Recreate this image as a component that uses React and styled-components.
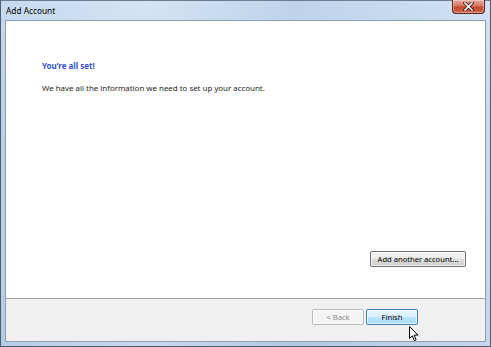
import React from 'react'
import styled, { createGlobalStyle } from 'styled-components'

const Global = createGlobalStyle`
  html, body { margin: 0; padding: 0; background: #ffffff; }
  body { font-family: "Noto Sans", "Open Sans", Arial, sans-serif; }
`

const Window = styled.div`
  position: relative;
  box-sizing: border-box;
  width: 491px;
  height: 347px;
  display: flex;
  flex-direction: column;
  border: 1px solid #4f5c6b;
  border-top-color: #6c7d90;
  padding: 0 4px 4px 4px;
  background:
    linear-gradient(90deg, rgba(255,255,255,0) 0%, rgba(255,255,255,0.25) 30%, rgba(160,185,215,0.2) 60%, rgba(255,255,255,0.2) 100%),
    linear-gradient(180deg, #c6daf0 0%, #bad1ea 40%, #b6cde8 100%);
`

const TitleBar = styled.div`
  height: 19px;
  display: flex;
  align-items: flex-start;
  margin: 0 1px 0 0;
`

const Title = styled.div`
  font-size: 8.3px;
  line-height: 12px;
  padding: 4px 0 0 1px;
  color: #000;
`

const CloseButton = styled.div`
  margin-left: auto;
  margin-top: -1px;
  box-sizing: border-box;
  width: 33px;
  height: 14px;
  border: 1px solid #5c241b;
  border-top: none;
  border-radius: 0 0 4px 4px;
  background: linear-gradient(180deg, #e9a99a 0%, #d87664 45%, #c2452f 55%, #d0694f 100%);
  box-shadow: inset 0 0 0 1px rgba(255,255,255,0.35);
  display: flex;
  align-items: center;
  justify-content: center;
`

const Client = styled.div`
  flex: 1;
  display: flex;
  flex-direction: column;
  border: 1px solid #8e9db0;
  background: #ffffff;
`

const Content = styled.div`
  flex: 1;
  display: flex;
  flex-direction: column;
  padding: 39px 19px 31px 36px;
  background: #ffffff;
  color: #222;
`

const Heading = styled.div`
  font-size: 8px;
  line-height: 11px;
  font-weight: 700;
  color: #3652c4;
`

const Text = styled.div`
  margin-top: 12px;
  font-size: 7.9px;
  line-height: 11px;
  color: #1e1e1e;
`

const Footer = styled.div`
  height: 32px;
  border-top: 1px solid #a0a0a0;
  background: #f0f0f0;
  display: flex;
  justify-content: flex-end;
  align-items: flex-start;
  gap: 2px;
  padding: 10px 67px 0 0;
`

const Button = styled.div`
  box-sizing: border-box;
  width: ${p => p.$w}px;
  height: 16px;
  display: flex;
  align-items: center;
  justify-content: center;
  font-size: 7.6px;
  border-radius: 2px;
  border: 1px solid ${p => p.$variant === 'default' ? '#3c7fb1' : p.$variant === 'disabled' ? '#b7bbbe' : '#707070'};
  color: ${p => p.$variant === 'disabled' ? '#8f8f8f' : '#000'};
  background: ${p => p.$variant === 'default'
    ? 'linear-gradient(180deg, #eaf6fd 0%, #d9f0fc 50%, #bee6fd 50%, #a7d9f5 100%)'
    : p.$variant === 'disabled'
      ? '#f4f4f4'
      : 'linear-gradient(180deg, #f2f2f2 0%, #ebebeb 50%, #dddddd 50%, #cfcfcf 100%)'};
  box-shadow: inset 0 0 0 1px rgba(255,255,255,0.7);
`

const AddButton = styled(Button)`
  margin-top: auto;
  align-self: flex-end;
`

const Cursor = styled.svg`
  position: absolute;
  left: 408px;
  top: 325px;
`

export default function App() {
  return (
    <>
      <Global />
      <Window>
        <TitleBar>
          <Title>Add Account</Title>
          <CloseButton>
            <svg width="11" height="9" viewBox="0 0 11 9">
              <path d="M2 1 L9 8 M9 1 L2 8" stroke="#3a1a14" strokeWidth="3.2" strokeLinecap="square" />
              <path d="M2 1 L9 8 M9 1 L2 8" stroke="#ffffff" strokeWidth="1.6" strokeLinecap="square" />
            </svg>
          </CloseButton>
        </TitleBar>
        <Client>
          <Content>
            <Heading>You’re all set!</Heading>
            <Text>We have all the information we need to set up your account.</Text>
            <AddButton $w={96}>Add another account...</AddButton>
          </Content>
          <Footer>
            <Button $w={52} $variant="disabled">&lt; Back</Button>
            <Button $w={52} $variant="default">Finish</Button>
          </Footer>
        </Client>
        <Cursor width="10" height="16" viewBox="0 0 10 16">
          <path d="M0.5 0.5 L0.5 12.5 L3.3 9.8 L5.3 14.6 L7.1 13.8 L5.1 9.1 L9 9.1 Z" fill="#ffffff" stroke="#000000" strokeWidth="1" strokeLinejoin="round" />
        </Cursor>
      </Window>
    </>
  )
}
